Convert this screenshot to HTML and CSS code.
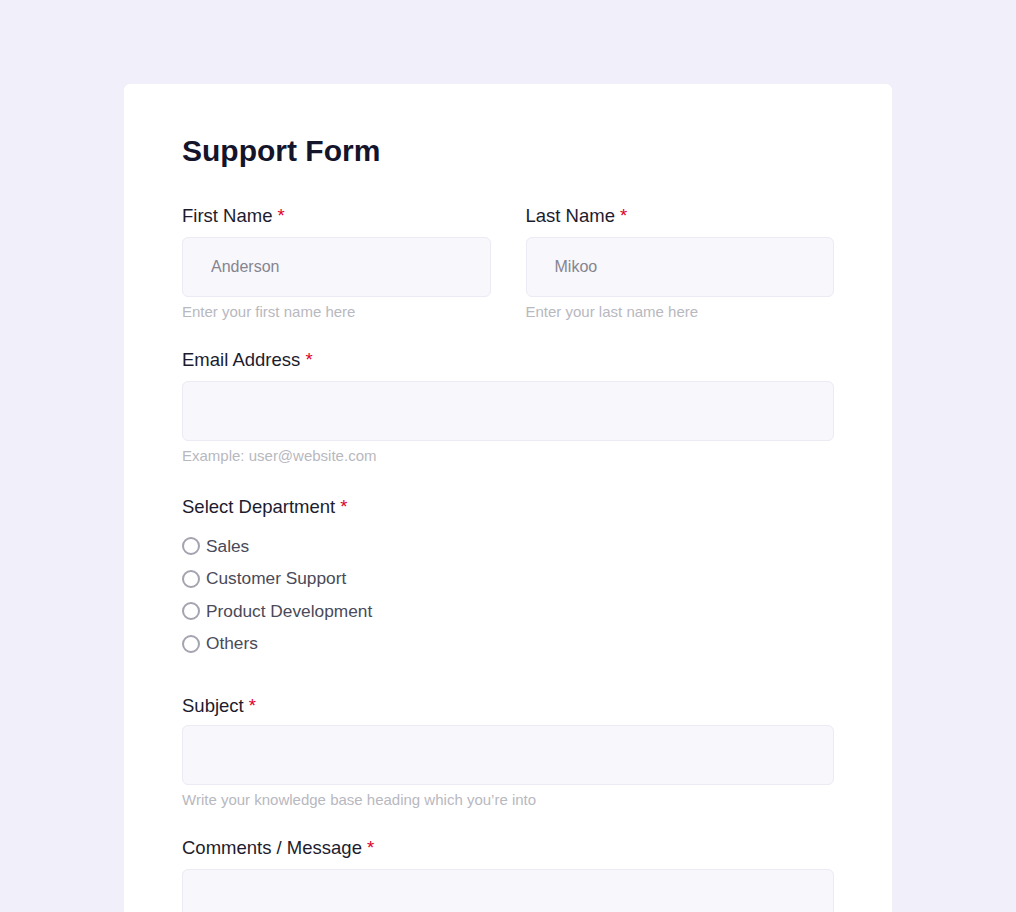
FILE: index.html
```html
<!DOCTYPE html>
<html lang="en">
<head>
    <meta charset="UTF-8">
    <meta name="viewport" content="width=device-width, initial-scale=1.0">
    <title>Support Form</title>
    <link rel="stylesheet" href="styles.css">
</head>
<body>
    <div class="container">
        <h1>Support Form</h1>
        <form class="support-form">
            <div class="row">
                <div class="field">
                    <label class="label">First Name <span class="req">*</span></label>
                    <input type="text" class="input" value="Anderson">
                    <div class="help">Enter your first name here</div>
                </div>
                <div class="field">
                    <label class="label">Last Name <span class="req">*</span></label>
                    <input type="text" class="input" value="Mikoo">
                    <div class="help">Enter your last name here</div>
                </div>
            </div>

            <div class="field">
                <label class="label">Email Address <span class="req">*</span></label>
                <input type="email" class="input">
                <div class="help">Example: user@website.com</div>
            </div>

            <div class="field field-radio">
                <label class="label">Select Department <span class="req">*</span></label>
                <div class="radio-list">
                    <label class="radio"><span class="dot"></span>Sales</label>
                    <label class="radio"><span class="dot"></span>Customer Support</label>
                    <label class="radio"><span class="dot"></span>Product Development</label>
                    <label class="radio"><span class="dot"></span>Others</label>
                </div>
            </div>

            <div class="field">
                <label class="label">Subject <span class="req">*</span></label>
                <input type="text" class="input">
                <div class="help">Write your knowledge base heading which you’re into</div>
            </div>

            <div class="field">
                <label class="label">Comments / Message <span class="req">*</span></label>
                <textarea class="input textarea"></textarea>
            </div>
        </form>
    </div>
</body>
</html>
```

FILE: styles.css
```css
* {
    box-sizing: border-box;
    margin: 0;
    padding: 0;
    font-family: "Liberation Sans", Arial, sans-serif;
}

body {
    background-color: #f1f0fa;
    padding-top: 84px;
}

.container {
    width: 768px;
    margin: 0 auto;
    background: #fff;
    border-radius: 6px;
    padding: 49px 58px 40px;
    min-height: 1000px;
}

h1 {
    font-size: 30px;
    line-height: 36px;
    font-weight: 700;
    color: #14142b;
    margin-bottom: 36px;
}

.support-form {
    display: flex;
    flex-direction: column;
    gap: 28px;
}

.row {
    display: grid;
    grid-template-columns: 1fr 1fr;
    gap: 35px;
}

.field {
    display: flex;
    flex-direction: column;
}

.label {
    font-size: 18.5px;
    line-height: 22px;
    color: #1c1c2e;
    margin-bottom: 10px;
}

.field-radio + .field .label {
    margin-bottom: 8px;
}

.req {
    color: #e0002a;
}

.input {
    height: 60px;
    background: #f8f7fc;
    border: 1px solid #eceaf4;
    border-radius: 6px;
    padding: 0 28px;
    font-size: 16px;
    color: #85858f;
    outline: none;
}

.textarea {
    height: 120px;
    resize: none;
}

.help {
    font-size: 15px;
    line-height: 18px;
    color: #b8b8c0;
    margin-top: 6px;
}

.field-radio {
    margin-top: 3px;
    margin-bottom: 7px;
}

.field-radio .label {
    margin-bottom: 12px;
}

.radio-list {
    display: flex;
    flex-direction: column;
}

.radio {
    display: flex;
    align-items: center;
    gap: 6px;
    height: 32.5px;
    font-size: 17.3px;
    color: #4a4a58;
}

.dot {
    width: 18px;
    height: 18px;
    border: 2px solid #a4a3b0;
    border-radius: 50%;
    background: #fff;
}
```
